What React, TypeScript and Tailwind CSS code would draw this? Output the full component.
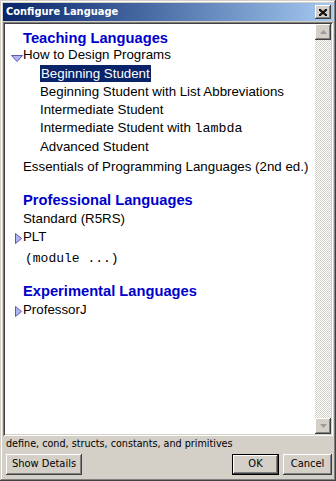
import type { ReactNode } from 'react';

const UI_FONT = "font-['DejaVu_Sans_Condensed','DejaVu_Sans',sans-serif]";
const LIST_FONT = "font-['Liberation_Sans',Arial,sans-serif]";
const MONO_FONT = "font-['Liberation_Mono','Courier_New',monospace]";

const RAISED =
  'shadow-[inset_-1px_-1px_#404040,inset_1px_1px_#ffffff,inset_-2px_-2px_#808080,inset_2px_2px_#d4d0c8]';

function Toggle({ open }: { open: boolean }) {
  return open ? (
    <svg width="12" height="7" viewBox="0 0 12 7" className="mt-[9px]" aria-hidden="true">
      <path d="M0.5 0.5 H11.5 L6 6.5 Z" fill="#b4b4f4" stroke="#5a5aa8" strokeWidth="1" />
    </svg>
  ) : (
    <svg width="7" height="11" viewBox="0 0 7 11" className="ml-[4px] mt-[5px]" aria-hidden="true">
      <path d="M0.5 0.5 V10.5 L6.5 5.5 Z" fill="#b4b4f4" stroke="#5a5aa8" strokeWidth="1" />
    </svg>
  );
}

function Header({ children, h }: { children: ReactNode; h: string }) {
  return (
    <div className={`${h} pl-[18px]`}>
      <span className="text-[14.7px] font-bold leading-[18px] text-[#0000cc]">{children}</span>
    </div>
  );
}

interface ItemProps {
  children: ReactNode;
  h: string;
  child?: boolean;
  toggle?: 'open' | 'closed';
  selected?: boolean;
}

function Item({ children, h, child, toggle, selected }: ItemProps) {
  return (
    <div className={`${h} flex ${child ? 'pl-[35px]' : 'pl-[18px]'}`}>
      {toggle && (
        <span className="-ml-[12px] flex w-[12px]">
          <Toggle open={toggle === 'open'} />
        </span>
      )}
      {selected ? (
        <span className="mt-px h-[17px] bg-[#0a246a] px-px text-[13.3px] leading-[17px] text-white">
          {children}
        </span>
      ) : (
        <span className="text-[13.3px] leading-[18px] text-black">{children}</span>
      )}
    </div>
  );
}

function ScrollArrow({ up }: { up?: boolean }) {
  return (
    <div className={`flex h-[16px] w-[16px] items-center justify-center bg-[#d4d0c8] ${RAISED}`}>
      <svg width="7" height="4" viewBox="0 0 7 4" aria-hidden="true">
        <path d={up ? 'M3.5 0 L7 4 H0 Z' : 'M0 0 H7 L3.5 4 Z'} fill="#9a9a9a" />
      </svg>
    </div>
  );
}

function Button({ children, width, primary }: { children: ReactNode; width: string; primary?: boolean }) {
  return (
    <button
      type="button"
      className={`${width} h-[21px] bg-[#d4d0c8] text-[11px] text-black ${
        primary
          ? 'border border-black shadow-[inset_-1px_-1px_#404040,inset_1px_1px_#ffffff,inset_-2px_-2px_#808080]'
          : RAISED
      }`}
    >
      {children}
    </button>
  );
}

export default function App() {
  return (
    <div
      className={`flex h-[481px] w-[336px] flex-col bg-[#d4d0c8] p-[3px] ${UI_FONT} shadow-[inset_-1px_-1px_#404040,inset_1px_1px_#d4d0c8,inset_-2px_-2px_#808080,inset_2px_2px_#ffffff]`}
    >
      {/* title bar */}
      <div className="flex h-[18px] items-center justify-between bg-linear-to-r from-[#0a246a] to-[#a6caf0] pl-[3px] pr-[2px]">
        <span className="text-[11px] font-bold text-white">Configure Language</span>
        <div className={`flex h-[14px] w-[16px] items-center justify-center bg-[#d4d0c8] ${RAISED}`}>
          <svg width="8" height="7" viewBox="0 0 8 7" aria-hidden="true">
            <path d="M0 0 L8 7 M1 0 L8 6 M0 1 L7 7 M8 0 L0 7 M7 0 L0 6 M8 1 L1 7" stroke="#000" strokeWidth="1" />
          </svg>
        </div>
      </div>

      {/* language list */}
      <div className="mt-px flex h-[414px] bg-white shadow-[inset_1px_1px_#808080,inset_-1px_-1px_#ffffff,inset_2px_2px_#404040,inset_-2px_-2px_#d4d0c8] p-[2px]">
        <div className={`flex-1 pt-[2px] ${LIST_FONT}`}>
          <Header h="h-[20px]">Teaching Languages</Header>
          <Item h="h-[18px]" toggle="open">How to Design Programs</Item>
          <Item h="h-[19px]" child selected>Beginning Student</Item>
          <Item h="h-[18px]" child>Beginning Student with List Abbreviations</Item>
          <Item h="h-[18px]" child>Intermediate Student</Item>
          <Item h="h-[19px]" child>
            Intermediate Student with <span className={MONO_FONT}>lambda</span>
          </Item>
          <Item h="h-[20px]" child>Advanced Student</Item>
          <Item h="h-[18px]">Essentials of Programming Languages (2nd ed.)</Item>
          <div className="h-[12px]" />
          <Header h="h-[22px]">Professional Languages</Header>
          <Item h="h-[18px]">Standard (R5RS)</Item>
          <Item h="h-[17px]" toggle="closed">PLT</Item>
          <div className="h-[23px] pl-[20px]">
            <span className={`${MONO_FONT} text-[13px] leading-[14px] text-black`}>(module ...)</span>
          </div>
          <div className="h-[11px]" />
          <Header h="h-[22px]">Experimental Languages</Header>
          <Item h="h-[18px]" toggle="closed">ProfessorJ</Item>
        </div>
        <div className="flex w-[16px] flex-col">
          <ScrollArrow up />
          <div className="flex-1 bg-[repeating-conic-gradient(#d4d0c8_0_25%,#ffffff_0_50%)] bg-size-[2px_2px]" />
          <ScrollArrow />
        </div>
      </div>

      {/* status + buttons */}
      <div className="h-[18px] pl-[3px] text-[10.7px] leading-[16px] text-black">
        define, cond, structs, constants, and primitives
      </div>
      <div className="flex h-[21px] items-center pl-[3px] pr-px">
        <Button width="w-[76px]">Show Details</Button>
        <div className="flex-1" />
        <Button width="w-[47px]" primary>OK</Button>
        <div className="w-[4px]" />
        <Button width="w-[49px]">Cancel</Button>
      </div>
    </div>
  );
}
